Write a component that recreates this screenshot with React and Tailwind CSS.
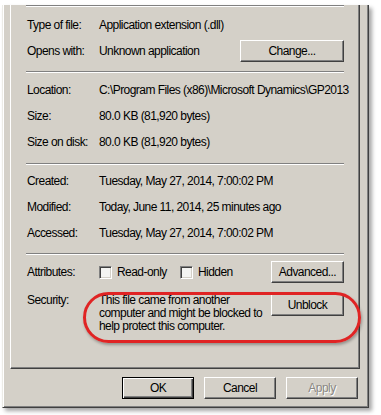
const btn =
  "h-[22px] flex items-center justify-center bg-[#d4d0c8] border-t border-l border-r border-b border-t-white border-l-white border-r-[#404040] border-b-[#404040] shadow-[inset_-1px_-1px_#808080]";

function Sep({ className = "" }) {
  return <div className={`-ml-px h-[2px] border-t border-b border-t-[#808080] border-b-white ${className}`} />;
}

function Row({ label, children }) {
  return (
    <div className="h-[26px] flex items-center">
      <div className="w-[72px] shrink-0">{label}</div>
      <div className="flex-1 flex items-center whitespace-nowrap">{children}</div>
    </div>
  );
}

function Check({ label }) {
  return (
    <div className="flex items-center gap-[5px]">
      <div className="w-[13px] h-[13px] bg-[#f4f4f2] border border-t-[#808080] border-l-[#808080] border-r-white border-b-white shadow-[inset_1px_1px_#404040,inset_-1px_-1px_#d4d0c8]" />
      <span>{label}</span>
    </div>
  );
}

export default function App() {
  return (
    <div className="w-[381px] h-[415px] bg-white overflow-hidden text-[12px] leading-none tracking-[-0.55px] text-black font-['Liberation_Sans',Arial,sans-serif]">
      <div className="ml-[2px] w-[367px] h-[403px] bg-[#d4d0c8] border-l border-r border-b border-l-[#ecebe6] border-r-[#404040] border-b-[#404040] shadow-[inset_1px_0_#fff,inset_-1px_-1px_#808080,3px_3px_4px_rgba(0,0,0,0.35)]">
        <div className="relative ml-[7px] w-[350px] h-[364px] border-l border-r border-b border-l-white border-r-[#404040] border-b-[#404040] shadow-[inset_-1px_-1px_#808080]">
          <div className="pl-[16px] pr-[15px]">
            <Sep className="mt-[5px]" />
            <div className="mt-[5px]">
              <Row label="Type of file:">Application extension (.dll)</Row>
              <Row label="Opens with:">
                Unknown application
                <div className={`${btn} ml-auto w-[104px]`}>Change...</div>
              </Row>
            </div>
            <Sep className="mt-[7px]" />
            <div className="mt-[4px]">
              <Row label="Location:">C:\Program Files (x86)\Microsoft Dynamics\GP2013</Row>
              <Row label="Size:">80.0 KB (81,920 bytes)</Row>
              <Row label="Size on disk:">80.0 KB (81,920 bytes)</Row>
            </div>
            <Sep className="mt-[8px]" />
            <div className="mt-[3px]">
              <Row label="Created:">Tuesday, May 27, 2014, 7:00:02 PM</Row>
              <Row label="Modified:">Today, June 11, 2014, 25 minutes ago</Row>
              <Row label="Accessed:">Tuesday, May 27, 2014, 7:00:02 PM</Row>
            </div>
            <Sep className="mt-[7px]" />
            <div className="mt-[4px]">
              <Row label="Attributes:">
                <div className="w-[81px]">
                  <Check label="Read-only" />
                </div>
                <Check label="Hidden" />
                <div className={`${btn} ml-auto w-[73px]`}>Advanced...</div>
              </Row>
            </div>
            <div className="mt-[9px] flex items-start leading-[13px]">
              <div className="w-[72px] shrink-0">Security:</div>
              <div className="flex-1 whitespace-nowrap">
                This file came from another
                <br />
                computer and might be blocked to
                <br />
                help protect this computer.
              </div>
              <div className={`${btn} w-[73px] leading-none`}>Unblock</div>
            </div>
          </div>
          <div className="absolute left-[72px] top-[287px] w-[278px] h-[51px] rounded-full border-[3px] border-[#e02424] shadow-[1px_2px_3px_rgba(0,0,0,0.3)]" />
        </div>
        <div className="mt-[8px] pr-[10px] flex justify-end gap-[10px]">
          <div className="w-[72px] h-[22px] flex items-center justify-center bg-[#d4d0c8] border border-black shadow-[inset_1px_1px_#fff,inset_-1px_-1px_#404040,inset_-2px_-2px_#808080]">
            OK
          </div>
          <div className={`${btn} w-[72px]`}>Cancel</div>
          <div className={`${btn} w-[72px] text-[#8a8884] [text-shadow:1px_1px_0_#fff]`}>Apply</div>
        </div>
      </div>
    </div>
  );
}
